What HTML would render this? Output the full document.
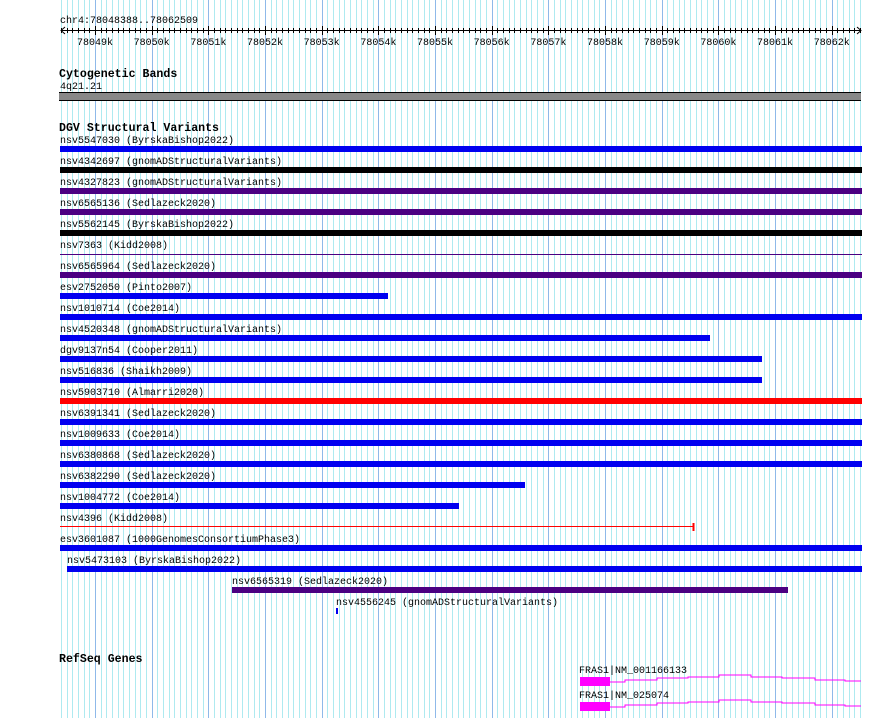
<!DOCTYPE html>
<html><head><meta charset="utf-8"><style>
html,body{margin:0;padding:0;background:#fff;}
body{width:890px;height:718px;position:relative;overflow:hidden;font-family:"Liberation Mono",monospace;font-size:10px;color:#000;}
svg{position:absolute;left:0;top:0;}
.t{position:absolute;white-space:pre;line-height:12px;}
.b{font-weight:bold;font-size:11.6px;}
.bar{position:absolute;height:6px;}
</style></head><body>
<svg id="g" width="890" height="718"></svg>
<div class="t" style="left:60px;top:16px">chr4:78048388..78062509</div>
<div class="t b" style="left:59px;top:69px">Cytogenetic Bands</div>
<div class="t" style="left:60px;top:82px">4q21.21</div>
<div style="position:absolute;left:59px;top:92px;width:802px;height:7px;background:#888;border-top:1px solid #000;border-bottom:1px solid #000"></div>
<div class="t b" style="left:59px;top:123px">DGV Structural Variants</div>
<div id="rows"></div>
<div class="t b" style="left:59px;top:654px">RefSeq Genes</div>
<div class="t" style="left:579px;top:666px">FRAS1|NM_001166133</div>
<div class="t" style="left:579px;top:691px">FRAS1|NM_025074</div>
<div style="position:absolute;left:580px;top:677px;width:30px;height:9px;background:#f0f"></div>
<div style="position:absolute;left:580px;top:702px;width:30px;height:9px;background:#f0f"></div>
<script>
var s=document.getElementById('g'),h='';
var m0=95,st=5.667;
for(var i=-6;i<=135;i++){var x=m0+i*st;if(x<60||x>862)continue;x=Math.round(x)+0.5;
 var maj=(i%10===0);h+='<line x1="'+x+'" y1="0" x2="'+x+'" y2="718" stroke="'+(maj?'#8fb9e9':'#aeeaf0')+'" stroke-width="1"/>';
 h+='<line x1="'+x+'" y1="'+(maj?26:28)+'" x2="'+x+'" y2="'+(maj?35:33)+'" stroke="#000"/>';}
h+='<line x1="61" y1="30.5" x2="861" y2="30.5" stroke="#000"/>';
h+='<polyline points="65,27 61,30.5 65,34" fill="none" stroke="#000"/><polyline points="857,27 861,30.5 857,34" fill="none" stroke="#000"/>';
for(var k=0;k<14;k++){var x=m0+k*56.67;h+='<text x="'+x+'" y="45" font-family="Liberation Mono, monospace" font-size="10" text-anchor="middle">'+(78049+k)+'k</text>';}
h+='<polyline points="610,682 625,682 625,680 657,680 657,678 688,678 688,677 719,677 719,675 751,675 751,677 782,677 782,678 815,678 815,680 845,680 845,681 861,681" fill="none" stroke="#f0f"/>';
h+='<polyline points="610,707 625,707 625,705 657,705 657,703 688,703 688,702 719,702 719,700 751,700 751,702 782,702 782,703 815,703 815,705 845,705 845,706 861,706" fill="none" stroke="#f0f"/>';
h+='<line x1="60" y1="526.5" x2="693" y2="526.5" stroke="#f00"/><line x1="693.5" y1="523" x2="693.5" y2="531" stroke="#f00" stroke-width="2"/>';
s.innerHTML=h;
var B='#0000f0',K='#000',P='#4b0082',R='#f00';
var rows=[
['nsv5547030 (ByrskaBishop2022)',60,862,B],
['nsv4342697 (gnomADStructuralVariants)',60,862,K],
['nsv4327823 (gnomADStructuralVariants)',60,862,P],
['nsv6565136 (Sedlazeck2020)',60,862,P],
['nsv5562145 (ByrskaBishop2022)',60,862,K],
['nsv7363 (Kidd2008)',60,862,P,1],
['nsv6565964 (Sedlazeck2020)',60,862,P],
['esv2752050 (Pinto2007)',60,388,B],
['nsv1010714 (Coe2014)',60,862,B],
['nsv4520348 (gnomADStructuralVariants)',60,710,B],
['dgv9137n54 (Cooper2011)',60,762,B],
['nsv516836 (Shaikh2009)',60,762,B],
['nsv5903710 (Almarri2020)',60,862,R],
['nsv6391341 (Sedlazeck2020)',60,862,B],
['nsv1009633 (Coe2014)',60,862,B],
['nsv6380868 (Sedlazeck2020)',60,862,B],
['nsv6382290 (Sedlazeck2020)',60,525,B],
['nsv1004772 (Coe2014)',60,459,B],
['nsv4396 (Kidd2008)',60,60,R,2],
['esv3601087 (1000GenomesConsortiumPhase3)',60,862,B],
['nsv5473103 (ByrskaBishop2022)',67,862,B],
['nsv6565319 (Sedlazeck2020)',232,788,P],
['nsv4556245 (gnomADStructuralVariants)',336,338,B]];
var o='';
rows.forEach(function(r,i){var y=146+21*i;
 o+='<div class="t" style="left:'+r[1]+'px;top:'+(y-10)+'px">'+r[0]+'</div>';
 if(r[4]===1)o+='<div class="bar" style="left:60px;top:'+(y+3)+'px;width:802px;height:1px;background:'+r[3]+'"></div>';
 else if(!r[4])o+='<div class="bar" style="left:'+r[1]+'px;top:'+y+'px;width:'+(r[2]-r[1])+'px;background:'+r[3]+'"></div>';
});
document.getElementById('rows').innerHTML=o;
</script>
</body></html>
